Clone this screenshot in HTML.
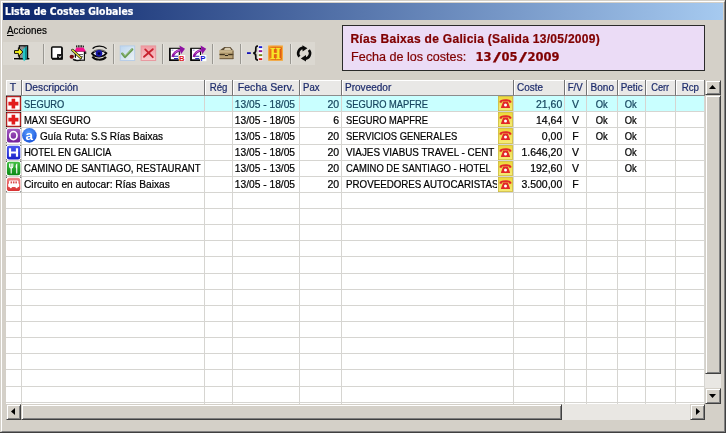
<!DOCTYPE html>
<html lang="es"><head><meta charset="utf-8"><title>Lista de Costes Globales</title>
<style>
html,body{margin:0;padding:0}
body{width:726px;height:433px;overflow:hidden;background:#d4d0c8;position:relative;font-family:"Liberation Sans",Arial,sans-serif;font-size:10.5px;color:#000}
.a{position:absolute}
.t{position:absolute;white-space:pre;will-change:opacity;-webkit-text-stroke:0.22px currentColor}
#title{left:3px;top:3px;width:720px;height:17px;background:linear-gradient(90deg,#0a246a 0%,#a6caf0 100%)}
.sep{position:absolute;top:44px;width:1px;height:20px;background:#9a9892;box-shadow:1px 0 0 #e6e4df}
#panel{left:342px;top:25px;width:361px;height:44px;border:1px solid #2a2a2a;background:#ebdcf6}
.hd{position:absolute;top:80px;height:16px;background:#e9e8e6;border-right:1px solid #747474;border-bottom:1px solid #8c8c8c;box-shadow:inset 1px 1px 0 #fff;box-sizing:border-box}
.vl{position:absolute;width:1px;background:#d6d5d1}
.hl{position:absolute;height:1px;background:#d6d5d1;left:6px;width:699px}
.btn{position:absolute;background:#d4d0c8;box-sizing:border-box;border:1px solid;border-color:#d4d0c8 #404040 #404040 #d4d0c8;box-shadow:inset 1px 1px 0 #fff,inset -1px -1px 0 #808080}
.sl{display:inline-block;width:10px;text-align:center;transform:scaleX(1.9)}
.trk{position:absolute;background:#e9e7e3}
</style></head><body>

<div class="a" style="left:0;top:0;width:725px;height:432px;border-right:1px solid #404040;border-bottom:1px solid #404040"></div>
<div class="a" style="left:1px;top:1px;width:724px;height:431px;border:1px solid;border-color:#fff #808080 #808080 #fff;box-sizing:border-box"></div>
<div class="a" id="title"></div>
<div class="a" style="left:3px;top:42px;width:312px;height:23px;background:#dbd8d1"></div>
<div class="t" style="left:4.80px;top:3px;font-size:10.5px;line-height:17px;height:17px;color:#fff;font-weight:bold;font-family:'DejaVu Sans Condensed','DejaVu Sans','Liberation Sans',sans-serif;transform:scaleX(0.9856);transform-origin:0 0;">Lista de Costes Globales</div>
<div class="t" style="left:7.20px;top:23px;font-size:10.5px;line-height:14px;height:14px;color:#000;transform:scaleX(0.9341);transform-origin:0 0;"><u>A</u>cciones</div>
<div class="sep" style="left:43px"></div>
<div class="sep" style="left:113px"></div>
<div class="sep" style="left:162px"></div>
<div class="sep" style="left:212px"></div>
<div class="sep" style="left:240px"></div>
<div class="sep" style="left:290px"></div>
<svg class="a" style="left:0;top:40px" width="320" height="26" viewBox="0 40 320 26">
<defs>
<linearGradient id="gchk" x1="0" y1="0" x2="1" y2="1"><stop offset="0" stop-color="#bcd6f0"/><stop offset="1" stop-color="#eef3f4"/></linearGradient>
<linearGradient id="gx" x1="0" y1="0" x2="0" y2="1"><stop offset="0" stop-color="#f09aa2"/><stop offset="1" stop-color="#f8cdd0"/></linearGradient>
<radialGradient id="gh" cx="0.5" cy="0.5" r="0.7"><stop offset="0" stop-color="#e85a10"/><stop offset="0.7" stop-color="#ee7a18"/><stop offset="1" stop-color="#f4a838"/></radialGradient>
</defs>
<!-- 1 exit door -->
<g>
<path d="M13.2 57.6H30.2V60.2H13.2Z" fill="#f4f2ee" opacity=".8"/>
<rect x="19.4" y="45.8" width="8.2" height="12.8" fill="#757575" stroke="#0c0c0c" stroke-width="1.3"/>
<rect x="20.2" y="46.6" width="3.4" height="11.6" fill="#8f8f8f"/>
<path d="M14 58.7H29.4" stroke="#000" stroke-width="1.5"/>
<path d="M22.7 49.8L26.6 46.2V58.8L24 61.3L22.7 58.6Z" fill="#22c8c8"/>
<path d="M25.2 47.6L26.6 46.2V58.8L25.2 60.2Z" fill="#0b7f84"/>
<path d="M14.5 50.6H18.4V47.7L22.9 52L18.4 56.3V53.4H14.5Z" fill="#f8f41c" stroke="#0c0c0c" stroke-width="1" stroke-linejoin="round"/>
</g>
<!-- 2 white note -->
<g>
<rect x="51.7" y="47" width="10.2" height="11.6" rx="1" fill="#fff" stroke="#0a0a0a" stroke-width="1.5"/>
<path d="M62.1 47.5V59H52" stroke="#0a0a0a" stroke-width="1.3" fill="none"/>
<rect x="57.1" y="54.1" width="5.4" height="5.2" fill="#0a0a0a"/>
<path d="M58.7 55.8L59.9 57.8L61.1 55.8" stroke="#fff" stroke-width=".9" fill="none"/>
</g>
<!-- 3 notepad with pencil -->
<g>
<rect x="75.4" y="51" width="9" height="9.2" fill="#fff" stroke="#111" stroke-width="1.2"/>
<path d="M78 54.5H83M78 56.7H83" stroke="#555" stroke-width=".9"/>
<path d="M74.6 51.6L76.4 47.4H83.4L86 51.6Z" fill="#f5108e"/>
<path d="M76.6 47.4V45.4M78.3 47.4V45.2M80 47.4V45.2M81.7 47.4V45.2M83.4 47.4V45.6" stroke="#111" stroke-width="1"/>
<path d="M85.7 51.5V54" stroke="#111" stroke-width="1.1"/>
<path d="M72.4 50L81 58" stroke="#1a1a1a" stroke-width="2.5" stroke-linecap="round"/>
<path d="M72.4 50L81 58" stroke="#f4ec3a" stroke-width="1.1" stroke-linecap="round"/>
<ellipse cx="71.8" cy="56.8" rx="2.2" ry="2" fill="#74080f"/>
<path d="M73 59.4C75.5 60.8 78.5 60.9 81 60" stroke="#111" stroke-width="1.3" fill="none"/>
<path d="M73.8 57.4C75.4 58.8 77.4 59 79 58.7" stroke="#fff" stroke-width="1.3" fill="none"/>
</g>
<!-- 4 eye -->
<g>
<path d="M92 53.6C94.5 50 102.5 49.2 106.4 53.2C103.5 57.2 95.5 58 92 53.6Z" fill="#f4f4f4" stroke="#0a0a0a" stroke-width="1.7"/>
<path d="M93.5 51.8C96 49.6 102 49.4 105.2 51.6" stroke="#686868" stroke-width="1.5" fill="none"/>
<circle cx="99" cy="53.4" r="3.3" fill="#1616a8"/>
<circle cx="99" cy="53.6" r="1.4" fill="#04042e"/>
<path d="M92.6 48.6C95.5 45.4 103 45 106.6 48.6" stroke="#0a0a0a" stroke-width="1.3" fill="none"/>
<path d="M92.4 56.6C95 60.4 103 60.8 106 56.8" stroke="#0a0a0a" stroke-width="2" fill="none"/>
</g>
<!-- 5 check -->
<g>
<rect x="120.2" y="45.9" width="14.5" height="14.6" fill="url(#gchk)" stroke="#b4cce8" stroke-width=".9"/>
<path d="M122.2 53.6L125 57L132.2 49.4" stroke="#6a9c52" stroke-width="2.3" fill="none" stroke-linecap="round" stroke-linejoin="round"/>
<path d="M122.6 53.2L125 56L131.8 49.2" stroke="#9cc488" stroke-width=".7" fill="none" stroke-linecap="round" stroke-linejoin="round"/>
</g>
<!-- 6 X -->
<g>
<rect x="141.1" y="45.9" width="14.6" height="14.6" fill="url(#gx)" stroke="#e8949c" stroke-width=".9"/>
<path d="M145.2 49.4L152.8 57.2M152.8 49.2L144 56.8" stroke="#c8202e" stroke-width="1.8" fill="none" stroke-linecap="round"/>
</g>
<!-- 7 doc arrow B -->
<g id="docarrow">
<rect x="169.7" y="48.3" width="9.6" height="11.8" fill="#fff" stroke="#0a0a0a" stroke-width="1.1"/>
<path d="M169.9 48.3V60.2H179.4" stroke="#0a0a0a" stroke-width="1.6" fill="none"/>
<path d="M174 56.2H178M174 58.6H178" stroke="#2424b0" stroke-width="1.1"/>
<path d="M171.6 50.2H173.4" stroke="#8888cc" stroke-width=".9"/>
<path d="M172.6 57C173.4 53.4 176.6 50.8 181 50" stroke="#8e12a2" stroke-width="2.5" fill="none"/>
<path d="M179.4 45.6L185 48.8L181 54.2Z" fill="#8e12a2"/>
<path d="M174 53.600C175.4 51.8 177.6 50.6 180 50" stroke="#d884e6" stroke-width=".8" fill="none"/>
</g>
<rect x="178.8" y="55" width="6.4" height="6.2" fill="#fff"/>
<text x="179.1" y="60.7" font-family="'Liberation Sans',Arial,sans-serif" font-weight="bold" font-size="7.8" fill="#e01818">B</text>
<!-- 8 doc arrow P -->
<use href="#docarrow" x="21.2"/>
<rect x="200" y="55" width="6.4" height="6.2" fill="#fff"/>
<text x="200.3" y="60.7" font-family="'Liberation Sans',Arial,sans-serif" font-weight="bold" font-size="7.8" fill="#1212d0">P</text>
<!-- 9 box -->
<g>
<path d="M219.6 50.6L224.4 46.9H230.4L233.3 50.6Z" fill="#5a4930"/>
<path d="M224.2 48.9L225.6 47.7H229.8L231.4 49.9H224.4Z" fill="#d8ccb0"/>
<rect x="219.5" y="50.4" width="13.8" height="8.5" fill="#bca476"/>
<rect x="219.5" y="50.4" width="13.8" height="2" fill="#c9b48a"/>
<path d="M219.5 54.5H233.3" stroke="#43361f" stroke-width="1.4"/>
<path d="M224.8 54.5H228.2" stroke="#bca476" stroke-width="1.6"/>
<path d="M225 55.5H228" stroke="#2c2418" stroke-width="1"/>
<path d="M233 50.6V59M219.6 58.7H233.3" stroke="#6a5638" stroke-width="1"/>
</g>
<!-- 10 -{ dots -->
<g>
<rect x="258.4" y="45.6" width="4.2" height="15" fill="#fff"/>
<path d="M247 53.1H250.8" stroke="#1212b8" stroke-width="1.8"/>
<path d="M258 46C255.4 46 255.8 48 255.8 50C255.8 52 255 53 253.2 53.1C255 53.2 255.8 54.2 255.8 56.2C255.8 58.2 255.4 60.2 258 60.2" stroke="#0a0a0a" stroke-width="1.7" fill="none"/>
<rect x="258.8" y="46.2" width="3.4" height="1.9" fill="#1a1ad0"/>
<rect x="258.8" y="50.2" width="3.4" height="1.9" fill="#8a129a"/>
<rect x="258.8" y="54.2" width="3.4" height="1.9" fill="#76881c"/>
<rect x="258.8" y="58.2" width="3.4" height="1.9" fill="#d81a1a"/>
</g>
<!-- 11 H -->
<g>
<rect x="268.3" y="45.7" width="14.6" height="14.9" fill="url(#gh)"/>
<rect x="268.7" y="46.1" width="13.8" height="14.1" fill="none" stroke="#f6b040" stroke-width=".9"/>
<text transform="translate(270.9 59.3) scale(0.74 1)" font-family="'Liberation Serif','Times New Roman',serif" font-weight="bold" font-size="17.4" fill="#d02a10" stroke="#d02a10" stroke-width="1.2">H</text>
<text transform="translate(270.5 59) scale(0.74 1)" font-family="'Liberation Serif','Times New Roman',serif" font-weight="bold" font-size="17.4" fill="#f8e62a" stroke="#f8e62a" stroke-width=".7">H</text>
</g>
<!-- 12 refresh -->
<g fill="none" stroke="#0a0a0a" stroke-width="2.6">
<path d="M299.4 56.6A5.3 5.3 0 0 1 303.4 47.9"/>
<path d="M308.9 50A5.3 5.3 0 0 1 304.8 58.6"/>
</g>
<path d="M302.4 45.2L307.4 48.2L302.6 51.6Z" fill="#0a0a0a"/>
<path d="M306 55L300.8 58.4L306 61.4Z" fill="#0a0a0a"/>
</svg>

<div class="a" id="panel"></div>
<div class="t" style="left:350.40px;top:31.8px;font-size:12px;line-height:14px;height:14px;color:#800000;font-weight:bold;letter-spacing:0.290px;">Rías Baixas de Galicia (Salida 13/05/2009)</div>
<div class="t" style="left:350.60px;top:49.9px;font-size:12.6px;line-height:14px;height:14px;color:#800000;transform:scaleX(0.9981);transform-origin:0 0;">Fecha de los costes:</div>
<div class="t" style="left:475.50px;top:50.3px;font-size:11.5px;line-height:14px;height:14px;color:#800000;font-weight:bold;font-family:'DejaVu Sans','Liberation Sans',sans-serif;">13<span class="sl">/</span>05<span class="sl">/</span>2009</div>
<div class="a" style="left:6px;top:80px;width:699px;height:324px;background:#fff"></div>
<div class="a" style="left:22px;top:96px;width:683px;height:15px;background:#c9ffff"></div>
<div class="hd" style="left:6px;width:16px"></div>
<div class="t" style="left:9.69px;top:80px;font-size:10.5px;line-height:15px;height:15px;color:#1c2b6b;">T</div>
<div class="hd" style="left:22px;width:183px"></div>
<div class="t" style="left:24.70px;top:80px;font-size:10.5px;line-height:15px;height:15px;color:#1c2b6b;transform:scaleX(0.9716);transform-origin:0 0;">Descripción</div>
<div class="hd" style="left:205px;width:28px"></div>
<div class="t" style="left:208.87px;top:80px;font-size:10.5px;line-height:15px;height:15px;color:#1c2b6b;transform:scaleX(0.9187);transform-origin:50% 0;">Rég</div>
<div class="hd" style="left:233px;width:67px"></div>
<div class="t" style="left:237.67px;top:80px;font-size:10.5px;line-height:15px;height:15px;color:#1c2b6b;letter-spacing:0.083px;">Fecha Serv.</div>
<div class="hd" style="left:300px;width:42px"></div>
<div class="t" style="left:302.70px;top:80px;font-size:10.5px;line-height:15px;height:15px;color:#1c2b6b;transform:scaleX(0.9119);transform-origin:0 0;">Pax</div>
<div class="hd" style="left:342px;width:172px"></div>
<div class="t" style="left:344.70px;top:80px;font-size:10.5px;line-height:15px;height:15px;color:#1c2b6b;transform:scaleX(0.9556);transform-origin:0 0;">Proveedor</div>
<div class="hd" style="left:514px;width:51px"></div>
<div class="t" style="left:516.70px;top:80px;font-size:10.5px;line-height:15px;height:15px;color:#1c2b6b;transform:scaleX(0.9476);transform-origin:0 0;">Coste</div>
<div class="hd" style="left:565px;width:22px"></div>
<div class="t" style="left:567.33px;top:80px;font-size:10.5px;line-height:15px;height:15px;color:#1c2b6b;transform:scaleX(0.9178);transform-origin:50% 0;">F/V</div>
<div class="hd" style="left:587px;width:31px"></div>
<div class="t" style="left:589.73px;top:80px;font-size:10.5px;line-height:15px;height:15px;color:#1c2b6b;transform:scaleX(0.9539);transform-origin:50% 0;">Bono</div>
<div class="hd" style="left:618px;width:28px"></div>
<div class="t" style="left:619.83px;top:80px;font-size:10.5px;line-height:15px;height:15px;color:#1c2b6b;transform:scaleX(0.9424);transform-origin:50% 0;">Petic</div>
<div class="hd" style="left:646px;width:30px"></div>
<div class="t" style="left:650.29px;top:80px;font-size:10.5px;line-height:15px;height:15px;color:#1c2b6b;transform:scaleX(0.8814);transform-origin:50% 0;">Cerr</div>
<div class="hd" style="left:676px;width:29px"></div>
<div class="t" style="left:680.66px;top:80px;font-size:10.5px;line-height:15px;height:15px;color:#1c2b6b;transform:scaleX(0.9258);transform-origin:50% 0;">Rcp</div>
<div class="vl" style="left:21px;top:96px;height:308px"></div>
<div class="vl" style="left:204px;top:96px;height:308px"></div>
<div class="vl" style="left:232px;top:96px;height:308px"></div>
<div class="vl" style="left:299px;top:96px;height:308px"></div>
<div class="vl" style="left:341px;top:96px;height:308px"></div>
<div class="vl" style="left:513px;top:96px;height:308px"></div>
<div class="vl" style="left:564px;top:96px;height:308px"></div>
<div class="vl" style="left:586px;top:96px;height:308px"></div>
<div class="vl" style="left:617px;top:96px;height:308px"></div>
<div class="vl" style="left:645px;top:96px;height:308px"></div>
<div class="vl" style="left:675px;top:96px;height:308px"></div>
<div class="vl" style="left:704px;top:96px;height:308px"></div>
<div class="hl" style="top:111px"></div>
<div class="hl" style="top:127px"></div>
<div class="hl" style="top:144px"></div>
<div class="hl" style="top:160px"></div>
<div class="hl" style="top:176px"></div>
<div class="hl" style="top:192px"></div>
<div class="hl" style="top:208px"></div>
<div class="hl" style="top:224px"></div>
<div class="hl" style="top:240px"></div>
<div class="hl" style="top:256px"></div>
<div class="hl" style="top:273px"></div>
<div class="hl" style="top:289px"></div>
<div class="hl" style="top:305px"></div>
<div class="hl" style="top:321px"></div>
<div class="hl" style="top:337px"></div>
<div class="hl" style="top:353px"></div>
<div class="hl" style="top:369px"></div>
<div class="hl" style="top:386px"></div>
<div class="hl" style="top:402px"></div>
<svg class="a" style="left:0;top:0" width="726" height="433" viewBox="0 0 726 433">
<defs>
<linearGradient id="gpur" x1="0" y1="0" x2="0" y2="1"><stop offset="0" stop-color="#a45cc0"/><stop offset="1" stop-color="#74209a"/></linearGradient>
<radialGradient id="gblu" cx=".45" cy=".35" r=".7"><stop offset="0" stop-color="#5aa0ff"/><stop offset="1" stop-color="#1850d8"/></radialGradient>
<linearGradient id="gbl2" x1="0" y1="0" x2="0" y2="1"><stop offset="0" stop-color="#4a5af0"/><stop offset="1" stop-color="#1820c8"/></linearGradient>
<linearGradient id="ggrn" x1="0" y1="0" x2="0" y2="1"><stop offset="0" stop-color="#44c044"/><stop offset="1" stop-color="#0a8a14"/></linearGradient>
<linearGradient id="gred" x1="0" y1="0" x2="0" y2="1"><stop offset="0" stop-color="#f08888"/><stop offset="1" stop-color="#d83030"/></linearGradient>
<linearGradient id="gyel" x1="0" y1="0" x2="0" y2="1"><stop offset="0" stop-color="#ecd838"/><stop offset="1" stop-color="#f6ec78"/></linearGradient>
</defs>
<g transform="translate(6 96)">
<rect x="0.6" y="0.6" width="13.8" height="13.8" fill="#fff" stroke="#b22222" stroke-width="1.3"/>
<path d="M5.6 2.8H9.2V5.8H12.4V9.4H9.2V12.6H5.6V9.4H2.4V5.8H5.6Z" fill="#e21c1c"/>
<path d="M0 0h1v1h-1zM14 0h1v1h-1zM0 14h1v1h-1zM14 14h1v1h-1z" fill="#222"/>
</g>
<g transform="translate(498 96)">
<rect x="0.4" y="0.4" width="14.2" height="14.2" fill="url(#gyel)" stroke="#cdbb3a" stroke-width=".8"/>
<path d="M1.6 6.2C1.2 4.4 3.4 3.2 7.5 3.2C11.6 3.2 13.8 4.4 13.4 6.2C13.2 7 11.4 7 11 6.2C10.8 5.6 10.4 5.2 9.6 5.2H5.4C4.6 5.2 4.2 5.6 4 6.2C3.6 7 1.8 7 1.6 6.2Z" fill="#e22828"/>
<path d="M5.2 5.6H9.8L12 11.2C12.2 11.8 11.8 12 11.4 12H3.6C3.2 12 2.8 11.8 3 11.2Z" fill="#e22828"/>
<circle cx="7.5" cy="9" r="1.5" fill="#fff"/>
</g>
<g transform="translate(6 112)">
<rect x="0.6" y="0.6" width="13.8" height="13.8" fill="#fff" stroke="#b22222" stroke-width="1.3"/>
<path d="M5.6 2.8H9.2V5.8H12.4V9.4H9.2V12.6H5.6V9.4H2.4V5.8H5.6Z" fill="#e21c1c"/>
<path d="M0 0h1v1h-1zM14 0h1v1h-1zM0 14h1v1h-1zM14 14h1v1h-1z" fill="#222"/>
</g>
<g transform="translate(498 112)">
<rect x="0.4" y="0.4" width="14.2" height="14.2" fill="url(#gyel)" stroke="#cdbb3a" stroke-width=".8"/>
<path d="M1.6 6.2C1.2 4.4 3.4 3.2 7.5 3.2C11.6 3.2 13.8 4.4 13.4 6.2C13.2 7 11.4 7 11 6.2C10.8 5.6 10.4 5.2 9.6 5.2H5.4C4.6 5.2 4.2 5.6 4 6.2C3.6 7 1.8 7 1.6 6.2Z" fill="#e22828"/>
<path d="M5.2 5.6H9.8L12 11.2C12.2 11.8 11.8 12 11.4 12H3.6C3.2 12 2.8 11.8 3 11.2Z" fill="#e22828"/>
<circle cx="7.5" cy="9" r="1.5" fill="#fff"/>
</g>
<g transform="translate(6 128)">
<rect x="0.9" y="0.7" width="13.4" height="13.7" rx="2.2" fill="url(#gpur)"/><path d="M0 0h1v1h-1zM14.2 0h1v1h-1zM0 14.2h1v1h-1zM14.2 14.2h1v1h-1z" fill="#333" opacity=".8"/>
<ellipse cx="7.4" cy="7.6" rx="3.6" ry="4.1" fill="none" stroke="#fff" stroke-width="1.7"/>
<circle cx="23.4" cy="7.4" r="7.3" fill="url(#gblu)"/>
<text x="19.6" y="11.9" font-family="'Liberation Sans',Arial,sans-serif" font-weight="bold" font-size="13.5" fill="#fff">a</text>
</g>
<g transform="translate(498 128)">
<rect x="0.4" y="0.4" width="14.2" height="15.2" fill="url(#gyel)" stroke="#cdbb3a" stroke-width=".8"/>
<path d="M1.6 6.2C1.2 4.4 3.4 3.2 7.5 3.2C11.6 3.2 13.8 4.4 13.4 6.2C13.2 7 11.4 7 11 6.2C10.8 5.6 10.4 5.2 9.6 5.2H5.4C4.6 5.2 4.2 5.6 4 6.2C3.6 7 1.8 7 1.6 6.2Z" fill="#e22828"/>
<path d="M5.2 5.6H9.8L12 11.2C12.2 11.8 11.8 12 11.4 12H3.6C3.2 12 2.8 11.8 3 11.2Z" fill="#e22828"/>
<circle cx="7.5" cy="9" r="1.5" fill="#fff"/>
</g>
<g transform="translate(6 145)">
<rect x="0.9" y="0.7" width="13.4" height="13.7" rx="2.2" fill="url(#gbl2)"/><path d="M0 0h1v1h-1zM14.2 0h1v1h-1zM0 14.2h1v1h-1zM14.2 14.2h1v1h-1z" fill="#333" opacity=".8"/>
<path d="M4 3.2V11.8M11 3.2V11.8M4 7.5H11" stroke="#fff" stroke-width="2.2" fill="none"/>
</g>
<g transform="translate(498 145)">
<rect x="0.4" y="0.4" width="14.2" height="14.2" fill="url(#gyel)" stroke="#cdbb3a" stroke-width=".8"/>
<path d="M1.6 6.2C1.2 4.4 3.4 3.2 7.5 3.2C11.6 3.2 13.8 4.4 13.4 6.2C13.2 7 11.4 7 11 6.2C10.8 5.6 10.4 5.2 9.6 5.2H5.4C4.6 5.2 4.2 5.6 4 6.2C3.6 7 1.8 7 1.6 6.2Z" fill="#e22828"/>
<path d="M5.2 5.6H9.8L12 11.2C12.2 11.8 11.8 12 11.4 12H3.6C3.2 12 2.8 11.8 3 11.2Z" fill="#e22828"/>
<circle cx="7.5" cy="9" r="1.5" fill="#fff"/>
</g>
<g transform="translate(6 161)">
<rect x="0.9" y="0.7" width="13.4" height="13.5" rx="2.2" fill="url(#ggrn)"/><path d="M0 0h1v1h-1zM14.2 0h1v1h-1zM0 14.2h1v1h-1zM14.2 14.2h1v1h-1z" fill="#333" opacity=".8"/>
<path d="M3.6 2.6V5.6C3.6 6.8 4.4 7.2 5.2 7.2C6 7.2 6.8 6.8 6.8 5.6V2.6M5.2 2.6V12.4" stroke="#fff" stroke-width="1.1" fill="none"/>
<path d="M10.9 2.4C9.4 3.4 9.3 6.4 10.2 7.6V12.4H11.3V2.4Z" fill="#fff"/>
</g>
<g transform="translate(498 161)">
<rect x="0.4" y="0.4" width="14.2" height="14.2" fill="url(#gyel)" stroke="#cdbb3a" stroke-width=".8"/>
<path d="M1.6 6.2C1.2 4.4 3.4 3.2 7.5 3.2C11.6 3.2 13.8 4.4 13.4 6.2C13.2 7 11.4 7 11 6.2C10.8 5.6 10.4 5.2 9.6 5.2H5.4C4.6 5.2 4.2 5.6 4 6.2C3.6 7 1.8 7 1.6 6.2Z" fill="#e22828"/>
<path d="M5.2 5.6H9.8L12 11.2C12.2 11.8 11.8 12 11.4 12H3.6C3.2 12 2.8 11.8 3 11.2Z" fill="#e22828"/>
<circle cx="7.5" cy="9" r="1.5" fill="#fff"/>
</g>
<g transform="translate(6 177)">
<rect x="0.9" y="0.7" width="13.4" height="13.3" rx="2.6" fill="url(#gred)"/><path d="M0 0h1v1h-1zM14.2 0h1v1h-1zM0 14.2h1v1h-1zM14.2 14.2h1v1h-1z" fill="#333" opacity=".8"/>
<path d="M3 4.6C3 3.8 3.6 3.4 4.4 3.4H11C11.8 3.4 12.4 3.8 12.4 4.6V9.6H3Z" fill="#fff"/>
<rect x="2.2" y="6.6" width="11" height="3.4" rx=".8" fill="#fff"/>
<rect x="4.6" y="4.4" width="1.5" height="2" fill="#d84848"/><rect x="7" y="4.4" width="1.5" height="2" fill="#d84848"/><rect x="9.4" y="4.4" width="1.5" height="2" fill="#d84848"/>
<circle cx="4.8" cy="10.2" r="1.1" fill="#fff"/><circle cx="10.6" cy="10.2" r="1.1" fill="#fff"/>
</g>
<g transform="translate(498 177)">
<rect x="0.4" y="0.4" width="14.2" height="14.2" fill="url(#gyel)" stroke="#cdbb3a" stroke-width=".8"/>
<path d="M1.6 6.2C1.2 4.4 3.4 3.2 7.5 3.2C11.6 3.2 13.8 4.4 13.4 6.2C13.2 7 11.4 7 11 6.2C10.8 5.6 10.4 5.2 9.6 5.2H5.4C4.6 5.2 4.2 5.6 4 6.2C3.6 7 1.8 7 1.6 6.2Z" fill="#e22828"/>
<path d="M5.2 5.6H9.8L12 11.2C12.2 11.8 11.8 12 11.4 12H3.6C3.2 12 2.8 11.8 3 11.2Z" fill="#e22828"/>
<circle cx="7.5" cy="9" r="1.5" fill="#fff"/>
</g>
</svg>
<div class="t" style="left:24.40px;top:96.55px;font-size:10.5px;line-height:15px;height:15px;color:#17465f;transform:scaleX(0.8854);transform-origin:0 0;width:202.84px;overflow:hidden;">SEGURO</div>
<div class="t" style="left:234.45px;top:96.55px;font-size:10.5px;line-height:15px;height:15px;color:#17465f;transform:scaleX(0.9727);transform-origin:50% 0;">13/05 - 18/05</div>
<div class="t" style="left:327.51px;top:96.55px;font-size:10.5px;line-height:15px;height:15px;color:#17465f;">20</div>
<div class="t" style="left:345.90px;top:96.55px;font-size:10.5px;line-height:15px;height:15px;color:#17465f;transform:scaleX(0.8884);transform-origin:0 0;width:170.08px;overflow:hidden;">SEGURO MAPFRE</div>
<div class="t" style="left:536.02px;top:96.55px;font-size:10.5px;line-height:15px;height:15px;color:#17465f;">21,60</div>
<div class="t" style="left:571.99px;top:96.55px;font-size:10.5px;line-height:15px;height:15px;color:#17465f;">V</div>
<div class="t" style="left:594.99px;top:96.55px;font-size:10.5px;line-height:15px;height:15px;color:#17465f;transform:scaleX(0.8941);transform-origin:50% 0;">Ok</div>
<div class="t" style="left:623.79px;top:96.55px;font-size:10.5px;line-height:15px;height:15px;color:#17465f;transform:scaleX(0.8941);transform-origin:50% 0;">Ok</div>
<div class="t" style="left:24.40px;top:112.68px;font-size:10.5px;line-height:15px;height:15px;color:#000;transform:scaleX(0.8973);transform-origin:0 0;width:200.15px;overflow:hidden;">MAXI SEGURO</div>
<div class="t" style="left:234.45px;top:112.68px;font-size:10.5px;line-height:15px;height:15px;color:#000;transform:scaleX(0.9727);transform-origin:50% 0;">13/05 - 18/05</div>
<div class="t" style="left:333.36px;top:112.68px;font-size:10.5px;line-height:15px;height:15px;color:#000;">6</div>
<div class="t" style="left:345.90px;top:112.68px;font-size:10.5px;line-height:15px;height:15px;color:#000;transform:scaleX(0.8884);transform-origin:0 0;width:170.08px;overflow:hidden;">SEGURO MAPFRE</div>
<div class="t" style="left:536.02px;top:112.68px;font-size:10.5px;line-height:15px;height:15px;color:#000;">14,64</div>
<div class="t" style="left:571.99px;top:112.68px;font-size:10.5px;line-height:15px;height:15px;color:#000;">V</div>
<div class="t" style="left:594.99px;top:112.68px;font-size:10.5px;line-height:15px;height:15px;color:#000;transform:scaleX(0.8941);transform-origin:50% 0;">Ok</div>
<div class="t" style="left:623.79px;top:112.68px;font-size:10.5px;line-height:15px;height:15px;color:#000;transform:scaleX(0.8941);transform-origin:50% 0;">Ok</div>
<div class="t" style="left:39.60px;top:128.81px;font-size:10.5px;line-height:15px;height:15px;color:#000;transform:scaleX(0.9493);transform-origin:0 0;width:173.17px;overflow:hidden;">Guía Ruta: S.S Rías Baixas</div>
<div class="t" style="left:234.45px;top:128.81px;font-size:10.5px;line-height:15px;height:15px;color:#000;transform:scaleX(0.9727);transform-origin:50% 0;">13/05 - 18/05</div>
<div class="t" style="left:327.51px;top:128.81px;font-size:10.5px;line-height:15px;height:15px;color:#000;">20</div>
<div class="t" style="left:345.90px;top:128.81px;font-size:10.5px;line-height:15px;height:15px;color:#000;transform:scaleX(0.8960);transform-origin:0 0;width:168.64px;overflow:hidden;">SERVICIOS GENERALES</div>
<div class="t" style="left:541.86px;top:128.81px;font-size:10.5px;line-height:15px;height:15px;color:#000;">0,00</div>
<div class="t" style="left:572.29px;top:128.81px;font-size:10.5px;line-height:15px;height:15px;color:#000;">F</div>
<div class="t" style="left:594.99px;top:128.81px;font-size:10.5px;line-height:15px;height:15px;color:#000;transform:scaleX(0.8941);transform-origin:50% 0;">Ok</div>
<div class="t" style="left:623.79px;top:128.81px;font-size:10.5px;line-height:15px;height:15px;color:#000;transform:scaleX(0.8941);transform-origin:50% 0;">Ok</div>
<div class="t" style="left:24.40px;top:144.94px;font-size:10.5px;line-height:15px;height:15px;color:#000;transform:scaleX(0.9060);transform-origin:0 0;width:198.24px;overflow:hidden;">HOTEL EN GALICIA</div>
<div class="t" style="left:234.45px;top:144.94px;font-size:10.5px;line-height:15px;height:15px;color:#000;transform:scaleX(0.9727);transform-origin:50% 0;">13/05 - 18/05</div>
<div class="t" style="left:327.51px;top:144.94px;font-size:10.5px;line-height:15px;height:15px;color:#000;">20</div>
<div class="t" style="left:345.90px;top:144.94px;font-size:10.5px;line-height:15px;height:15px;color:#000;transform:scaleX(0.9396);transform-origin:0 0;width:160.81px;overflow:hidden;">VIAJES VIABUS TRAVEL - CENT</div>
<div class="t" style="left:521.42px;top:144.94px;font-size:10.5px;line-height:15px;height:15px;color:#000;">1.646,20</div>
<div class="t" style="left:571.99px;top:144.94px;font-size:10.5px;line-height:15px;height:15px;color:#000;">V</div>
<div class="t" style="left:623.79px;top:144.94px;font-size:10.5px;line-height:15px;height:15px;color:#000;transform:scaleX(0.8941);transform-origin:50% 0;">Ok</div>
<div class="t" style="left:24.40px;top:161.07px;font-size:10.5px;line-height:15px;height:15px;color:#000;transform:scaleX(0.9159);transform-origin:0 0;width:196.09px;overflow:hidden;">CAMINO DE SANTIAGO, RESTAURANT</div>
<div class="t" style="left:234.45px;top:161.07px;font-size:10.5px;line-height:15px;height:15px;color:#000;transform:scaleX(0.9727);transform-origin:50% 0;">13/05 - 13/05</div>
<div class="t" style="left:327.51px;top:161.07px;font-size:10.5px;line-height:15px;height:15px;color:#000;">20</div>
<div class="t" style="left:345.90px;top:161.07px;font-size:10.5px;line-height:15px;height:15px;color:#000;transform:scaleX(0.8986);transform-origin:0 0;width:168.15px;overflow:hidden;">CAMINO DE SANTIAGO - HOTEL</div>
<div class="t" style="left:530.17px;top:161.07px;font-size:10.5px;line-height:15px;height:15px;color:#000;">192,60</div>
<div class="t" style="left:571.99px;top:161.07px;font-size:10.5px;line-height:15px;height:15px;color:#000;">V</div>
<div class="t" style="left:623.79px;top:161.07px;font-size:10.5px;line-height:15px;height:15px;color:#000;transform:scaleX(0.8941);transform-origin:50% 0;">Ok</div>
<div class="t" style="left:24.40px;top:177.2px;font-size:10.5px;line-height:15px;height:15px;color:#000;transform:scaleX(0.9721);transform-origin:0 0;width:184.75px;overflow:hidden;">Circuito en autocar: Rías Baixas</div>
<div class="t" style="left:234.45px;top:177.2px;font-size:10.5px;line-height:15px;height:15px;color:#000;transform:scaleX(0.9727);transform-origin:50% 0;">13/05 - 18/05</div>
<div class="t" style="left:327.51px;top:177.2px;font-size:10.5px;line-height:15px;height:15px;color:#000;">20</div>
<div class="t" style="left:345.90px;top:177.2px;font-size:10.5px;line-height:15px;height:15px;color:#000;transform:scaleX(0.9290);transform-origin:0 0;width:162.65px;overflow:hidden;">PROVEEDORES AUTOCARISTAS</div>
<div class="t" style="left:521.42px;top:177.2px;font-size:10.5px;line-height:15px;height:15px;color:#000;">3.500,00</div>
<div class="t" style="left:572.29px;top:177.2px;font-size:10.5px;line-height:15px;height:15px;color:#000;">F</div>
<!--SCROLL-->
<div class="trk" style="left:705px;top:80px;width:16px;height:324px"></div>
<div class="btn" style="left:705px;top:80px;width:16px;height:15px"></div>
<div class="btn" style="left:705px;top:95px;width:16px;height:279px"></div>
<div class="btn" style="left:705px;top:388px;width:16px;height:16px"></div>
<svg class="a" style="left:709px;top:85px" width="7" height="4"><path d="M0 4L3.5 0L7 4Z" fill="#000"/></svg>
<svg class="a" style="left:709px;top:394px" width="7" height="4"><path d="M0 0L3.5 4L7 0Z" fill="#000"/></svg>
<div class="trk" style="left:6px;top:404px;width:699px;height:16px"></div>
<div class="btn" style="left:6px;top:404px;width:15px;height:16px"></div>
<div class="btn" style="left:21px;top:404px;width:541px;height:16px"></div>
<div class="btn" style="left:690px;top:404px;width:15px;height:16px"></div>
<svg class="a" style="left:11px;top:408px" width="4" height="7"><path d="M4 0L0 3.5L4 7Z" fill="#000"/></svg>
<svg class="a" style="left:696px;top:408px" width="4" height="7"><path d="M0 0L4 3.5L0 7Z" fill="#000"/></svg>
</body></html>
